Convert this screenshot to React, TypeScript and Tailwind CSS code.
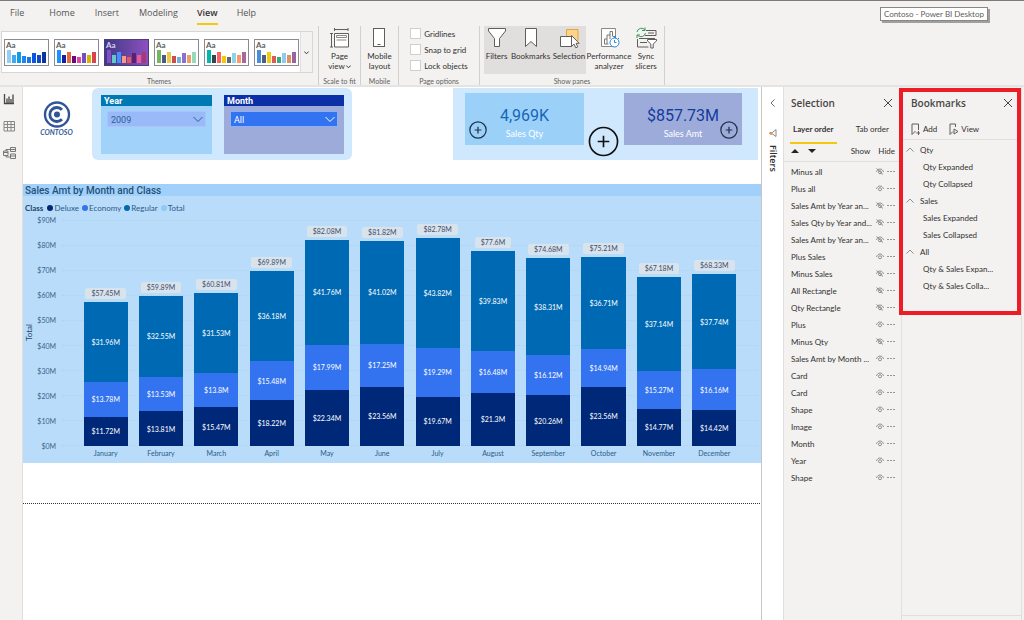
import type { ReactNode } from "react";

const TABS = ["File", "Home", "Insert", "Modeling", "View", "Help"];

const THEME_BARS = [13, 8, 11, 7, 6, 10, 8, 11];

const THEMES = [
  { name: "Default", dark: false, colors: ["#93cdf8", "#41a9f0", "#0f9bee", "#1f84f0", "#1876e8", "#0d55e0", "#0f49c4", "#0b33a4"] },
  { name: "Classic", dark: false, colors: ["#1e90ff", "#1222a0", "#e66c37", "#6b0a7b", "#e044a7", "#744ec2", "#d9b300", "#d64550"] },
  { name: "Twilight", dark: true, colors: ["#8250c4", "#5ecbc8", "#438fff", "#ff977e", "#eb5757", "#5b2071", "#ec5a96", "#a43b76"] },
  { name: "Garden", dark: false, colors: ["#73b761", "#4a588a", "#ecc846", "#cd4c46", "#71afe2", "#8d6fd1", "#ee9e64", "#95dabb"] },
  { name: "Classic teal", dark: false, colors: ["#01b8aa", "#374649", "#fd625e", "#f2c80f", "#5f6b6d", "#8ad4eb", "#fe9666", "#a66999"] },
  { name: "City park", dark: false, colors: ["#4a8ddc", "#4c5d8a", "#f3c911", "#dc5b57", "#33ae81", "#95c8f0", "#dd915f", "#9a64a0"] },
];

const SALES = [
  { month: "January", deluxe: 11.72, economy: 13.78, regular: 31.96, total: 57.45 },
  { month: "February", deluxe: 13.81, economy: 13.53, regular: 32.55, total: 59.89 },
  { month: "March", deluxe: 15.47, economy: 13.8, regular: 31.53, total: 60.81 },
  { month: "April", deluxe: 18.22, economy: 15.48, regular: 36.18, total: 69.89 },
  { month: "May", deluxe: 22.34, economy: 17.99, regular: 41.76, total: 82.08 },
  { month: "June", deluxe: 23.56, economy: 17.25, regular: 41.02, total: 81.82 },
  { month: "July", deluxe: 19.67, economy: 19.29, regular: 43.82, total: 82.78 },
  { month: "August", deluxe: 21.3, economy: 16.48, regular: 39.83, total: 77.6 },
  { month: "September", deluxe: 20.26, economy: 16.12, regular: 38.31, total: 74.68 },
  { month: "October", deluxe: 23.56, economy: 14.94, regular: 36.71, total: 75.21 },
  { month: "November", deluxe: 14.77, economy: 15.27, regular: 37.14, total: 67.18 },
  { month: "December", deluxe: 14.42, economy: 16.16, regular: 37.74, total: 68.33 },
];

const AXIS_MAX = 90;
const TICKS = [90, 80, 70, 60, 50, 40, 30, 20, 10, 0];

const LAYERS = [
  { name: "Minus all", hidden: true },
  { name: "Plus all", hidden: false },
  { name: "Sales Amt by Year an...", hidden: true },
  { name: "Sales Qty by Year and...", hidden: true },
  { name: "Sales Amt by Year an...", hidden: true },
  { name: "Plus Sales", hidden: false },
  { name: "Minus Sales", hidden: true },
  { name: "All Rectangle", hidden: true },
  { name: "Qty Rectangle", hidden: true },
  { name: "Plus", hidden: false },
  { name: "Minus Qty", hidden: true },
  { name: "Sales Amt by Month ...", hidden: false },
  { name: "Card", hidden: false },
  { name: "Card", hidden: false },
  { name: "Shape", hidden: false },
  { name: "Image", hidden: false },
  { name: "Month", hidden: false },
  { name: "Year", hidden: false },
  { name: "Shape", hidden: false },
];

const BOOKMARKS = [
  { group: "Qty", items: ["Qty Expanded", "Qty Collapsed"] },
  { group: "Sales", items: ["Sales Expanded", "Sales Collapsed"] },
  { group: "All", items: ["Qty & Sales Expan...", "Qty & Sales Colla..."] },
];

export default function App() {
  return (
    <div className="flex min-h-screen flex-col border-t border-[#7d7b79] bg-[#f3f2f1] font-['Lato','Open_Sans',sans-serif] text-[8px] leading-[10px] text-[#323130]">
      <TabBar />
      <Ribbon />
      <div className="flex flex-1">
        <ViewRail />
        <Report />
        <FiltersRail />
        <SelectionPane />
        <BookmarksPane />
        <div className="w-[3px] border-l border-[#e1dfdd]" />
      </div>
    </div>
  );
}

function TabBar() {
  return (
    <header className="relative h-[25px]">
      <nav className="flex h-full pl-[9px] font-['Open_Sans',sans-serif] text-[9px] leading-3 text-[#555]">
        {TABS.map((tab) => (
          <button
            key={tab}
            className={`mr-[18px] flex flex-col items-center pt-[6px] first:mr-[23px] ${
              tab === "View" ? "font-semibold text-[#333]" : ""
            }`}
          >
            <span className={tab === "View" ? "border-b-2 border-[#f2c811] pb-1" : "px-px"}>{tab}</span>
          </button>
        ))}
      </nav>
      <div
        role="tooltip"
        className="absolute right-9 top-[6px] border border-[#8a8886] bg-white px-[3px] pb-px pt-px text-[#605e5c] shadow-[2px_2px_0_#a19f9d]"
      >
        Contoso - Power BI Desktop
      </div>
    </header>
  );
}

function RibbonGroup({ label, className, children }: { label: string; className: string; children: ReactNode }) {
  return (
    <div className={`flex shrink-0 flex-col border-r border-[#d2d0ce] ${className}`}>
      <div className="flex h-12 shrink-0 justify-center">{children}</div>
      <div className="pt-[3px] text-center text-[7px] leading-2 text-[#605e5c]">{label}</div>
    </div>
  );
}

function RibbonButton({ lines, active, className, children }: { lines: ReactNode; active?: boolean; className: string; children: ReactNode }) {
  return (
    <button className={`flex h-12 shrink-0 flex-col items-center pt-px ${active ? "bg-[#e1dfdd]" : ""} ${className}`}>
      <svg viewBox="0 0 22 22" className="size-[22px]" fill="none" stroke="#605e5c">
        {children}
      </svg>
      <span className="mt-[2px] whitespace-nowrap">{lines}</span>
    </button>
  );
}

function Ribbon() {
  return (
    <div className="flex h-[61px] border-b-2 border-[#e5e4e2]">
      <RibbonGroup label="Themes" className="w-[319px]">
        <div className="mr-1 mt-[5px] flex h-[42px] w-[312px] border border-[#d8d6d4] bg-white">
          <div className="flex flex-1 items-center gap-[5px] pl-[2px]">
            {THEMES.map((theme) => (
              <button
                key={theme.name}
                aria-label={theme.name}
                className={`flex h-[27px] w-[45px] flex-col items-start justify-between border px-px pb-[2px] ${
                  theme.dark ? "border-[#4b3f78] bg-linear-to-r from-[#3f3a86] to-[#8d4fc0] text-[#d9d2ee]" : "border-[#8a8a90] bg-white text-[#605e5c]"
                }`}
              >
                <span className="text-[8px] font-bold leading-[10px]">Aa</span>
                <span className="flex h-[13px] items-end gap-px pl-px">
                  {theme.colors.map((color, i) => (
                    <span key={color} className="w-1" style={{ height: THEME_BARS[i], background: color }} />
                  ))}
                </span>
              </button>
            ))}
          </div>
          <button aria-label="More themes" className="flex w-3 items-center justify-center border-l border-[#e1dfdd] bg-[#f3f2f1]">
            <Chevron className="size-[5px] stroke-2 text-[#333]" />
          </button>
        </div>
      </RibbonGroup>

      <RibbonGroup label="Scale to fit" className="w-[42px]">
        <RibbonButton
          className="w-10"
          lines={
            <>
              Page
              <br />
              view
              <Chevron className="ml-px inline size-[5px] stroke-2" />
            </>
          }
        >
          <path d="M5.500 2.500H19M5.500 1v3M19 1v3M2.500 6.500v13.500M1 6.500h3M1 20h3" />
          <path d="M5.500 6.500H19.500V20H5.500z" fill="#fff" />
          <path d="M7.500 8.500H17.500v2H7.500zM7.500 13h10" stroke="#8a8886" />
        </RibbonButton>
      </RibbonGroup>

      <RibbonGroup label="Mobile" className="w-[38px]">
        <RibbonButton className="w-9" lines={<>Mobile<br />layout</>}>
          <rect x="4.500" y="1.500" width="11" height="18" fill="#fff" />
          <path d="M8.500 17.500h3" />
        </RibbonButton>
      </RibbonGroup>

      <RibbonGroup label="Page options" className="w-[81px]">
        <div className="flex flex-col gap-[5px] pt-[2px]">
          {["Gridlines", "Snap to grid", "Lock objects"].map((option) => (
            <label key={option} className="flex h-[11px] items-center gap-[3px] whitespace-nowrap">
              <input type="checkbox" className="size-[11px] appearance-none border border-[#d2d0ce] bg-white" />
              {option}
            </label>
          ))}
        </div>
      </RibbonGroup>

      <RibbonGroup label="Show panes" className="w-[185px]">
        <RibbonButton active className="w-[25px]" lines="Filters">
          <path d="M2.500 1.500h17v2.500l-6 7.500v8h-5v-8l-6-7.500z" fill="#fff" />
        </RibbonButton>
        <RibbonButton active className="w-[43px]" lines="Bookmarks">
          <path d="M5.500 1.500h11v18l-5.500-5-5.500 5z" fill="#fff" />
        </RibbonButton>
        <RibbonButton active className="w-[34px]" lines="Selection">
          <path d="M8.500 2.500h11.500V14H8.500z" fill="#fbd38a" stroke="#e8a33d" />
          <path d="M2.500 9.500h11v10h-11z" fill="#fff" />
          <path d="M13.500 8.500v11l2.500-2.500 1.800 3.800 2-.9-1.800-3.600h3.200z" fill="#fff" />
        </RibbonButton>
        <RibbonButton className="w-[46px]" lines={<>Performance<br />analyzer</>}>
          <path d="M3.500 1.500h14v18h-14z" fill="#fff" stroke="#8a8886" />
          <path d="M6.500 17v-5h2.500M9 17v-9h3v4M12 8V4.500h2.500v5M6.500 17h4" stroke="#797775" />
          <circle cx="16.500" cy="15.500" r="4.500" fill="#fff" stroke="#2b88d8" />
          <path d="M15 9.500h3M16.500 9.500v1.500M20 11l1 1M16.500 13v2.500h2" stroke="#2b88d8" />
        </RibbonButton>
        <RibbonButton className="w-[28px]" lines={<>Sync<br />slicers</>}>
          <path d="M11 3.500h10v5H10M2.500 12v8h11M5 15.500h7M13 6h6M4 11.500h16" />
          <path d="M2 5a4.500 4.500 0 0 1 8-2M10 .5V3.500H7M10.500 6a4.500 4.500 0 0 1-8 2M2 11V8h3" stroke="#3a9a5b" />
          <path d="M12.500 12.500h9v1.500l-3.300 3v4h-2.400v-4l-3.300-3z" fill="#fff" />
        </RibbonButton>
      </RibbonGroup>
    </div>
  );
}

function Chevron({ className }: { className: string }) {
  return (
    <svg viewBox="0 0 10 10" className={className} fill="none" stroke="currentColor">
      <path d="M.5 3L5 7.500 9.500 3" />
    </svg>
  );
}

function ViewRail() {
  return (
    <aside className="flex w-[23px] shrink-0 flex-col items-start gap-[15px] border-r border-[#e1dfdd] pl-[3px] pt-[6px]">
      <button aria-label="Report view">
        <svg viewBox="0 0 12 12" className="size-3" fill="none" stroke="#484644">
          <path d="M1.500 1v9.500H11M4 10V5.500M6 10V3.500M8 10V6M10 10V1.500" strokeWidth="1.300" />
        </svg>
      </button>
      <button aria-label="Data view">
        <svg viewBox="0 0 12 12" className="size-3" fill="none" stroke="#8a8886">
          <path d="M1 1.500h10.500v9.500H1zM1 4.500h10.500M1 7.500h10.500M4.500 1.500V11M8 1.500V11" />
        </svg>
      </button>
      <button aria-label="Model view">
        <svg viewBox="0 0 13 12" className="h-3 w-[13px]" fill="none" stroke="#797775">
          <path d="M.5 4h4.500v4.500H.5zM.5 5.500h4.500M7.500.5h5v4h-5zM7.500 2.500h5M7.500 7h5v4.500h-5zM7.500 9h5M3 4V2.500h4.500M3 8.500V10h4.500" />
        </svg>
      </button>
    </aside>
  );
}

function Report() {
  return (
    <main className="min-w-0 flex-1 border-r border-[#c8c6c4] bg-white">
      <div className="flex items-start pt-px">
        <ContosoLogo />
        <section className="flex h-[72px] w-[260px] shrink-0 justify-between rounded-md bg-[#d0e8fe] pl-[9px] pr-2 pt-[7px]">
          <div className="h-[59px] w-[111px] bg-[#a1d2fa] font-['Roboto',sans-serif]">
            <label htmlFor="year" className="block h-[11px] bg-[#0078b4] pl-[3px] text-[9px] font-bold leading-3 text-white">
              Year
            </label>
            <Slicer id="year" value="2009" className="border-[#a9c4f8] bg-[#9ab9f8] text-[#2c5f94]" />
          </div>
          <div className="h-[59px] w-[120px] bg-[#9dabdb] font-['Roboto',sans-serif]">
            <label htmlFor="month" className="block h-[11px] bg-[#0a2fa6] pl-[3px] text-[9px] font-bold leading-3 text-white">
              Month
            </label>
            <Slicer id="month" value="All" className="border-[#8fb0f5] bg-[#3273f2] text-white" />
          </div>
        </section>

        <section className="ml-auto mr-[3px] flex h-[72px] w-[305px] shrink-0 bg-[#d0e8fe] pl-3 pt-[5px]">
          <div className="relative h-[52px] w-[119px] bg-[#9bd1f9] pt-[13px] text-center">
            <div className="font-['Roboto',sans-serif] text-[16px] leading-5 text-[#1766b6]">4,969K</div>
            <div className="text-[9px] leading-4 text-white">Sales Qty</div>
            <PlusButton label="Expand quantity" className="absolute left-1 top-7 size-[18px]" />
          </div>
          <PlusButton label="Expand all" className="ml-1 mt-[33px] size-[31px]" heavy />
          <div className="relative ml-[5px] h-[52px] w-[118px] bg-[#9dabdb] pt-[13px] text-center">
            <div className="font-['Roboto',sans-serif] text-[16px] leading-5 text-[#123b9c]">$857.73M</div>
            <div className="text-[9px] leading-4 text-white">Sales Amt</div>
            <PlusButton label="Expand sales" className="absolute right-1 top-7 size-[18px]" />
          </div>
        </section>
      </div>

      <SalesChart />
      <div className="mr-px mt-10 border-t border-dotted border-[#323130]" />
    </main>
  );
}

function ContosoLogo() {
  return (
    <div className="ml-[18px] mr-5 flex w-[31px] shrink-0 flex-col items-center pt-[13px] text-[#2f5597]">
      <svg viewBox="0 0 28 27" className="h-[27px] w-7" fill="none" stroke="currentColor">
        <circle cx="14" cy="13.500" r="12" strokeWidth="2.400" />
        <path d="M19 8.800a7 7 0 1 0 0 9.400" strokeWidth="2.800" />
        <circle cx="14" cy="13.500" r="3" fill="currentColor" stroke="none" />
      </svg>
      <span className="font-['Lato',sans-serif] text-[7px] font-bold italic leading-[9px]">CONTOSO</span>
    </div>
  );
}

function Slicer({ id, value, className }: { id: string; value: string; className: string }) {
  return (
    <div className={`relative mx-[6px] mt-[5px] h-4 border ${className}`}>
      <select id={id} className="block h-full w-full appearance-none bg-transparent pl-[3px] pt-px text-[9px]">
        <option>{value}</option>
      </select>
      <Chevron className="pointer-events-none absolute right-[2px] top-[2px] size-[10px]" />
    </div>
  );
}

function PlusButton({ label, className, heavy }: { label: string; className: string; heavy?: boolean }) {
  return (
    <button aria-label={label} className={className}>
      <svg viewBox="0 0 32 32" className="size-full" fill="none" stroke={heavy ? "#111" : "#1f3347"} strokeWidth={heavy ? 1.7 : 2.2}>
        <circle cx="16" cy="16" r="14.500" />
        <path d="M16 10v12M10 16h12" />
      </svg>
    </button>
  );
}

function SalesChart() {
  return (
    <section className="mt-6 bg-[#b9dcfa] pb-1">
      <h2 className="h-3 bg-[#a1d1fa] pl-[2px] font-['Roboto',sans-serif] text-[10px] font-medium leading-[13px] text-[#1f5078]">
        Sales Amt by Month and Class
      </h2>
      <div className="flex items-center pl-[2px] pt-[6px] leading-3 text-[#2d5b85]">
        <span className="mr-1 font-bold text-[#1f4468]">Class</span>
        <Legend name="Deluxe" className="bg-[#002878]" />
        <Legend name="Economy" className="bg-[#3473f0]" />
        <Legend name="Regular" className="bg-[#0069b4]" />
        <Legend name="Total" className="bg-[#8ec9fa]" />
      </div>

      <div className="mt-[6px] flex h-[226px] pr-[3px]">
        <span className="w-3 rotate-180 text-center leading-3 text-[#1f4468] [writing-mode:vertical-rl]">Total</span>
        <div className="mr-[6px] flex w-[21px] flex-col justify-between text-right text-[7px] text-[#3c6288]">
          {TICKS.map((tick) => (
            <span key={tick} className="flex h-0 items-center justify-end">
              ${tick}M
            </span>
          ))}
        </div>
        <div className="relative flex-1">
          <div className="absolute inset-0 flex flex-col justify-between">
            {TICKS.map((tick) => (
              <span key={tick} className="border-t border-dotted border-[#b0d3ea]" />
            ))}
          </div>
          <div className="relative flex h-full px-4 text-[7px]">
            {SALES.map((row) => (
              <div key={row.month} className="flex h-full flex-1 flex-col items-center justify-end">
                <span className="mb-[3px] rounded-xs bg-[#d8e3ec] px-[6px] leading-[11px] text-[#3f4d6b]">${row.total}M</span>
                <Segment value={row.regular} className="bg-[#0069b4]" />
                <Segment value={row.economy} className="bg-[#3473f0]" />
                <Segment value={row.deluxe} className="bg-[#002878]" />
              </div>
            ))}
          </div>
        </div>
      </div>
      <div className="mt-px flex pl-[55px] pr-[19px] text-[7px] leading-3 text-[#2d5b85]">
        {SALES.map((row) => (
          <span key={row.month} className="flex-1 text-center">
            {row.month}
          </span>
        ))}
      </div>
    </section>
  );
}

function Legend({ name, className }: { name: string; className: string }) {
  return (
    <span className="mr-[3px] flex items-center gap-px">
      <span className={`size-[6px] rounded-full ${className}`} />
      {name}
    </span>
  );
}

function Segment({ value, className }: { value: number; className: string }) {
  return (
    <div
      className={`flex w-4/5 shrink-0 items-center justify-center text-white ${className}`}
      style={{ height: `${(value / AXIS_MAX) * 100}%` }}
    >
      ${value}M
    </div>
  );
}

function FiltersRail() {
  return (
    <aside className="flex w-[22px] shrink-0 flex-col items-center border-r border-[#e1dfdd] bg-white pt-3">
      <button aria-label="Expand filters">
        <Chevron className="size-2 rotate-90 text-[#484644]" />
      </button>
      <svg viewBox="0 0 8 8" className="mt-[22px] size-2" fill="none" stroke="#8a8886">
        <path d="M7 .5v7L3.500 5H1V3.500h2.500z" />
        <path d="M3.500 3.500H1V5h2.500" stroke="#e3913d" />
      </svg>
      <span className="mt-2 font-['Open_Sans',sans-serif] text-[9px] font-semibold leading-3 [writing-mode:vertical-rl]">Filters</span>
    </aside>
  );
}

function PaneTitle({ children }: { children: string }) {
  return (
    <div className="flex h-8 items-center justify-between pr-2 font-['Open_Sans',sans-serif] text-[10px] font-semibold leading-3 text-[#484644]">
      <h2>{children}</h2>
      <button aria-label={`Close ${children}`}>
        <svg viewBox="0 0 10 10" className="size-[10px]" fill="none" stroke="#484644">
          <path d="M1 1l8 8M9 1l-8 8" />
        </svg>
      </button>
    </div>
  );
}

function SelectionPane() {
  return (
    <aside className="w-[118px] shrink-0 border-r border-[#e1dfdd]">
      <div className="pl-[7px]">
        <PaneTitle>Selection</PaneTitle>
        <div className="flex justify-between pr-3 pt-[5px]">
          <button className="-ml-px border-b-2 border-[#f2c811] px-[3px] pb-[8px] font-bold">Layer order</button>
          <button className="pb-[10px]">Tab order</button>
        </div>
        <div className="flex h-[17px] items-center pb-[3px] pr-[6px]">
          <button aria-label="Move up">
            <svg viewBox="0 0 8 4" className="h-1 w-2" fill="#252423">
              <path d="M4 0l4 4H0z" />
            </svg>
          </button>
          <button aria-label="Move down" className="ml-[9px]">
            <svg viewBox="0 0 8 4" className="h-1 w-2" fill="#252423">
              <path d="M0 0h8L4 4z" />
            </svg>
          </button>
          <button className="ml-auto mr-2">Show</button>
          <button>Hide</button>
        </div>
      </div>
      <ul className="border-t border-[#e1dfdd] pt-px">
        {LAYERS.map((layer, i) => (
          <li key={i} className="flex h-[17px] items-center gap-[3px] pl-[7px] pr-[6px]">
            <span className="flex-1 whitespace-nowrap">{layer.name}</span>
            <button aria-label={layer.hidden ? "Show layer" : "Hide layer"}>
              <EyeIcon hidden={layer.hidden} />
            </button>
            <button aria-label="More options">
              <svg viewBox="0 0 8 2" className="h-[2px] w-2" fill="#979593">
                <path d="M0 0h2v1H0zM3 0h2v1H3zM6 0h2v1H6z" />
              </svg>
            </button>
          </li>
        ))}
      </ul>
    </aside>
  );
}

function EyeIcon({ hidden }: { hidden: boolean }) {
  return (
    <svg viewBox="0 0 16 14" className="h-[7px] w-2" fill="none" stroke="#797775" strokeWidth="1.600">
      <path d="M1 8C2 4 5 2 8 2s6 2 7 6" />
      <circle cx="8" cy="8.500" r="3" />
      {hidden && <path d="M1 1l13 12" />}
    </svg>
  );
}

function BookmarksPane() {
  return (
    <aside className="relative flex w-[119px] shrink-0 flex-col">
      <div className="pl-[9px]">
        <PaneTitle>Bookmarks</PaneTitle>
        <div className="flex h-[20px] items-center gap-3">
          <button className="flex items-center gap-[3px]">
            <svg viewBox="0 0 9 12" className="h-3 w-[9px]" fill="none" stroke="#605e5c">
              <path d="M5 9.500L4 8.500l-3 3V1h6.500v6M7.500 8v4M5.500 10h4" />
            </svg>
            Add
          </button>
          <button className="flex items-center gap-[2px]">
            <svg viewBox="0 0 10 12" className="h-3 w-[10px]" fill="none" stroke="#605e5c">
              <path d="M4 8.500l-3 3V1h5.500v3M5 6l4 2.500L5 11z" />
            </svg>
            View
          </button>
        </div>
      </div>
      <ul className="border-t border-[#e1dfdd] pt-px">
        {BOOKMARKS.map(({ group, items }) => (
          <li key={group}>
            <button className="flex h-[17px] items-center gap-[6px] pl-1">
              <Chevron className="size-2 rotate-180 text-[#797775]" />
              {group}
            </button>
            <ul>
              {items.map((item) => (
                <li key={item} className="flex h-[17px] items-center whitespace-nowrap pl-[21px]">
                  {item}
                </li>
              ))}
            </ul>
          </li>
        ))}
      </ul>
      <div className="mb-1 mt-auto border-t border-[#e1dfdd]" />
      {/* callout frame around the bookmark list */}
      <div className="pointer-events-none absolute -left-[3px] right-0 top-px h-[227px] border-4 border-[#ee1c25]" />
    </aside>
  );
}
